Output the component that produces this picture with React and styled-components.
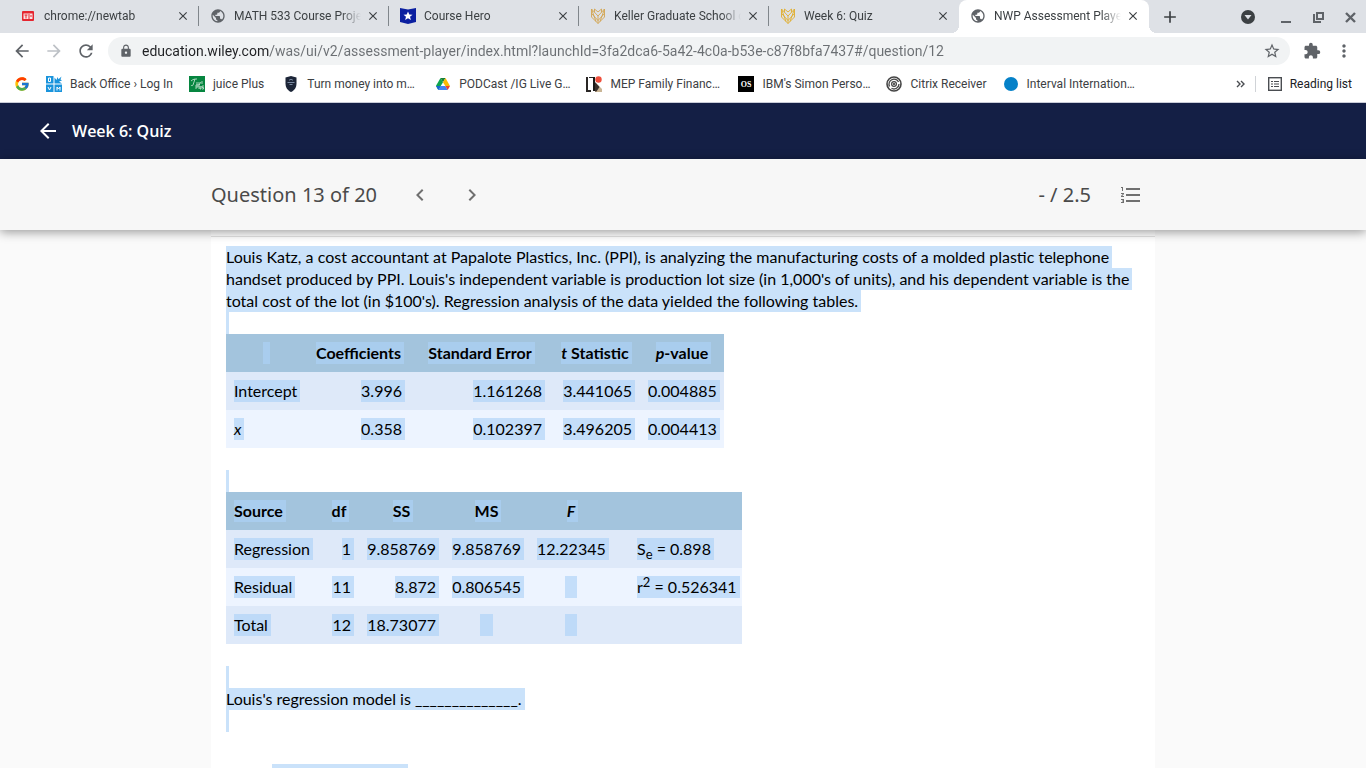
import styled, { createGlobalStyle, css } from "styled-components";
import {
    MdAdd,
    MdArrowBack,
    MdArrowForward,
    MdChevronLeft,
    MdChevronRight,
    MdClose,
    MdExtension,
    MdFormatListNumbered,
    MdLock,
    MdMoreVert,
    MdPublic,
    MdRefresh,
    MdStarBorder,
} from "react-icons/md";
import { FcGoogle } from "react-icons/fc";

const GlobalStyle = createGlobalStyle`
    * {
        box-sizing: border-box;
    }

    body {
        margin: 0;
        background: #fafafa;
        font-family: Roboto, "Liberation Sans", sans-serif;
    }

    button {
        display: flex;
        align-items: center;
        justify-content: center;
        flex: none;
        padding: 0;
        border: none;
        background: transparent;
        color: inherit;
        cursor: pointer;
    }

    svg {
        display: block;
        flex: none;
    }
`;

const Page = styled.div`
    display: flex;
    flex-direction: column;
    height: 100vh;
    overflow: hidden;
`;

/* ---------- browser ---------- */

const TabStrip = styled.div`
    display: flex;
    align-items: center;
    flex: none;
    height: 33px;
    padding-left: 9px;
    background: #dee1e6;
    color: #3c4043;
`;

const Tab = styled.div`
    position: relative;
    display: flex;
    align-items: center;
    flex: 0 1 190px;
    min-width: 0;
    height: 33px;
    padding: 0 10px 1px 11px;

    ${props =>
        props.$active
            ? css`
                background: #fff;
                border-radius: 8px 8px 0 0;

                &::before,
                &::after {
                    content: "";
                    position: absolute;
                    bottom: 0;
                    width: 8px;
                    height: 8px;
                }

                &::before {
                    left: -8px;
                    background: radial-gradient(circle at 0 0, transparent 8px, #fff 8px);
                }

                &::after {
                    right: -8px;
                    background: radial-gradient(circle at 100% 0, transparent 8px, #fff 8px);
                }
            `
            : ""
    }

    ${props =>
        props.$divider
            ? css`
                &::after {
                    content: "";
                    position: absolute;
                    top: 6px;
                    right: 0;
                    width: 1px;
                    height: 20px;
                    background: #80868b;
                }
            `
            : ""
    }
`;

const TabTitle = styled.span`
    flex: 1;
    min-width: 0;
    margin: 0 6px 0 8px;
    overflow: hidden;
    white-space: nowrap;
    font-size: 12px;
    line-height: 16px;
    mask-image: linear-gradient(to right, #000 calc(100% - 20px), transparent);
`;

const CloseTab = styled.button`
    width: 12px;
    height: 16px;
`;

const NewTab = styled.button`
    width: 28px;
    height: 28px;
    margin-left: 7px;
`;

const WindowControls = styled.div`
    display: flex;
    align-items: center;
    gap: 16px;
    margin-left: auto;
    padding-right: 8px;
    color: #5f6368;

    button {
        width: 16px;
        height: 16px;
    }

    button:first-child {
        margin-right: 6px;
        color: #3c4043;
    }
`;

const Toolbar = styled.div`
    display: flex;
    align-items: center;
    flex: none;
    gap: 12px;
    height: 36px;
    padding: 0 12px;
    background: #fff;
    color: #5f6368;
`;

const ToolButton = styled.button`
    width: 20px;
    height: 20px;
    color: ${props => (props.disabled ? "#bdc1c6" : "#5f6368")};
`;

const AddressBar = styled.div`
    display: flex;
    align-items: center;
    flex: 1;
    gap: 9px;
    height: 28px;
    padding: 0 8px 0 11px;
    border-radius: 14px;
    background: #f1f3f4;
`;

const AddressInput = styled.input`
    flex: 1;
    min-width: 0;
    height: 24px;
    padding: 0;
    border: none;
    outline: none;
    font-family: inherit;
    font-size: 14px;
    color: #202124;
    /* host part is darker than the path */
    background: linear-gradient(to right, #202124 128px, #6b6f73 128px);
    background-clip: text;
    -webkit-text-fill-color: transparent;
`;

const BookmarkBar = styled.nav`
    display: flex;
    align-items: center;
    flex: none;
    gap: 16px;
    height: 34px;
    padding: 0 14px 3px;
    background: #fff;
    border-bottom: 1px solid #c9ccd8;
`;

const Bookmark = styled.a`
    display: flex;
    align-items: center;
    gap: 8px;
    min-width: ${props => (props.$wide ? "136px" : 0)};
    font-size: 12px;
    line-height: 16px;
    white-space: nowrap;
    color: #3c4043;
    text-decoration: none;
`;

const BookmarkEnd = styled.div`
    display: flex;
    align-items: center;
    gap: 10px;
    margin-left: auto;
`;

const ReadingList = styled.button`
    gap: 8px;
    height: 16px;
    padding-left: 12px;
    border-left: 1px solid #d0d3d7;
    font-family: inherit;
    font-size: 12px;
    color: #202124;
`;

/* ---------- quiz ---------- */

const QuizHeader = styled.header`
    display: flex;
    align-items: center;
    flex: none;
    gap: 12px;
    height: 56px;
    padding: 0 36px;
    background: #141f45;
    color: #fff;
`;

const QuizTitle = styled.h1`
    margin: 0;
    font-family: "Open Sans", "Noto Sans", sans-serif;
    font-size: 16px;
    font-weight: 600;
    line-height: 24px;
`;

const QuestionBar = styled.div`
    position: relative;
    z-index: 1;
    flex: none;
    background: #f7f7f7;
    box-shadow: 0 2px 10px rgba(0, 0, 0, 0.4);
`;

const QuestionBarInner = styled.div`
    display: flex;
    align-items: center;
    max-width: 944px;
    height: 71px;
    margin: 0 auto;
    padding-right: 12px;
    font-family: "Noto Sans", "Open Sans", sans-serif;
    font-size: 20px;
    line-height: 28px;
    color: #4a4a4a;
`;

const QuestionTitle = styled.h2`
    margin: 0 31px 0 0;
    font-size: 20px;
    font-weight: 400;
`;

const QuestionNav = styled.div`
    display: flex;
    gap: 28px;
    color: #707070;
`;

const Score = styled.span`
    margin: 0 28px 0 auto;
`;

const ListButton = styled.button`
    color: #707070;
`;

const Sheet = styled.main`
    flex: 1;
    width: 100%;
    min-height: 0;
    max-width: 944px;
    margin: 0 auto;
    overflow: hidden;
    background: #fff;
    font-family: Lato, sans-serif;
    font-size: 16px;
    line-height: 22px;
    color: #000;
`;

const SheetTop = styled.div`
    height: 7px;
    border-bottom: 1px solid #e2e2e2;
`;

const QuestionBody = styled.div`
    padding: 9px 15px 0;
`;

const Selected = styled.span`
    margin-right: -3px;
    padding: 1px 3px 2px 0;
    background: rgba(172, 209, 247, 0.64);
    box-decoration-break: clone;
    -webkit-box-decoration-break: clone;

    sub,
    sup {
        font-size: 13px;
        line-height: 0;
    }
`;

const SelectedBlank = styled.span`
    display: inline-block;
    height: 22px;
    vertical-align: top;
    white-space: pre;
    background: rgba(172, 209, 247, 0.64);
`;

const Text = styled.p`
    margin: 0;
`;

const EmptyLine = styled.div`
    width: 3px;
    height: 22px;
    margin-top: ${props => (props.$spaced ? "22px" : 0)};
    background: #cae2fa;
`;

const DataTable = styled.table`
    table-layout: fixed;
    width: ${props => props.$width}px;
    border-collapse: collapse;

    th,
    td {
        height: 38px;
        padding: 8px;
        white-space: nowrap;
    }

    thead tr {
        background: #a3c4dd;
    }

    tbody tr:nth-child(odd) {
        background: #dee9f9;
    }

    tbody tr:nth-child(even) {
        background: #edf4ff;
    }
`;

const Column = styled.col`
    width: ${props => props.$width}px;
`;

const HeadCell = styled.th`
    text-align: ${props => props.$align};
`;

const Cell = styled.td`
    text-align: ${props => props.$align};
`;

const Answers = styled.div`
    padding: 32px 46px;
`;

const AnswerLine = styled.div`
    width: 136px;
    height: 22px;
    background: #cae2fa;
`;

/* ---------- icons ---------- */

const NewTabIcon = () => (
    <svg width="16" height="16" viewBox="0 0 16 16">
        <rect x="2" y="3" width="12" height="10" rx="1" fill="#e5252f" />
        <rect x="3.500" y="5.500" width="9" height="5.500" fill="#fbe3e4" />
        <path d="M4.500 7h3M6 7v3.500M9 6v5M10 8h2" stroke="#e5252f" strokeWidth="1" fill="none" />
    </svg>
);

const CourseHeroIcon = () => (
    <svg width="16" height="16" viewBox="0 0 16 16">
        <path d="M0 0l8 1.500L16 0v14l-8 2-8-2z" fill="#0b1fa0" />
        <path d="M8 3.500l1.300 3 3.200.2-2.500 2 .9 3.200L8 10.200l-2.900 1.700.9-3.200-2.500-2 3.200-.2z" fill="#fff" />
    </svg>
);

const KellerIcon = ({ color }) => (
    <svg width="16" height="16" viewBox="0 0 16 16" fill="none" stroke={color} strokeWidth=".9">
        <path d="M1.500 1v8L8 15.500 14.500 9V1L8 8zM1.500 1L6 13.500M14.500 1L10 13.500M4.500 4.200V1L8 4l3.500-3v3.200M1.500 5.500L8 12.500l6.500-7M8 8v7.500" />
    </svg>
);

const ProfileIcon = () => (
    <svg width="14" height="14" viewBox="0 0 14 14">
        <circle cx="7" cy="7" r="7" fill="#3c4043" />
        <path d="M3.500 5h7L7 9.500z" fill="#dee1e6" />
    </svg>
);

const MinimizeIcon = () => (
    <svg width="16" height="16" viewBox="0 0 16 16">
        <path d="M3 12h10v2H3z" fill="currentColor" />
    </svg>
);

const RestoreIcon = () => (
    <svg width="16" height="16" viewBox="0 0 16 16" fill="none" stroke="currentColor" strokeWidth="2">
        <path d="M7 4h6v6H7zM4 5v8h7" />
    </svg>
);

const CloseWindowIcon = () => (
    <svg width="16" height="16" viewBox="0 0 16 16" stroke="currentColor" strokeWidth="2.400">
        <path d="M4 4l9 9M13 4l-9 9" />
    </svg>
);

const BackOfficeIcon = () => (
    <svg width="16" height="16" viewBox="0 0 16 16">
        <path d="M0 0h7.500v7.500H0zM0 8.500h7.500V16H0zM8.500 8.500H16V16H8.500z" fill="#1a94dc" />
        <path d="M8.500 7.500V1.500l2 2.500 1-3 1 2.300L15.500.500l-1 3 1.500 1-3 1 3 2z" fill="#1a94dc" />
        <path d="M2.500 2v3.500h2V2zM2 11l1.500 3L5 11M11 14.500V11l1.500 2 1.500-2v3.500" fill="none" stroke="#fff" />
    </svg>
);

const JuiceIcon = () => (
    <svg width="16" height="16" viewBox="0 0 16 16">
        <rect width="16" height="16" fill="#068640" />
        <path
            d="M2 5c2-2 4-2 6-2M6 3L4 9c-.5 1-1.500 1-2 0M8 6v3M10 6v3l2-3M13 5v3M7 13V9h2v2H7M10 8v5M11 10v3h1v-3M13 13h1.500v-1.500H13V10h2"
            fill="none"
            stroke="#cfe9d9"
            strokeWidth=".8"
        />
    </svg>
);

const ShieldIcon = () => (
    <svg width="16" height="16" viewBox="0 0 16 16">
        <path d="M8 0l5.500 1.500v6C13.500 12 11 14.500 8 16c-3-1.500-5.500-4-5.500-8.500v-6z" fill="#1c2537" />
        <path d="M6 4.500a2.400 2.400 0 014 0M4.500 6.500h7M6.500 8.500h3" stroke="#8797b0" strokeWidth=".9" fill="none" />
    </svg>
);

const DriveIcon = () => (
    <svg width="16" height="16" viewBox="0 0 16 16">
        <path d="M5.500 2L1 9.800l2.300 4.200L8 6.200z" fill="#0da54f" />
        <path d="M5.500 2h5L8 6.200z" fill="#188038" />
        <path d="M10.500 2l4.500 8h-4.700L8 6.200z" fill="#fbbc04" />
        <path d="M5.700 10h4.600l2.400 4H3.300z" fill="#4285f4" />
        <path d="M1 10h4.700l-2.400 4z" fill="#1967d2" />
        <path d="M10.300 10H15l-2.300 4z" fill="#ea4335" />
    </svg>
);

const MepIcon = () => (
    <svg width="16" height="16" viewBox="0 0 16 16">
        <rect width="16" height="16" fill="#fff" />
        <path d="M0 1h2v13H0zM3 1h5v1H3zM0 14h5v2H0z" fill="#2a2725" />
        <path d="M7 1h2v14H7z" fill="#1b1917" />
        <path d="M10 7l6 6v3H9z" fill="#c9b595" />
        <path d="M9 6l4.500 5-3 4.500H9z" fill="#3a302a" />
        <circle cx="12.500" cy="3.500" r="3.200" fill="#ef4f3c" />
    </svg>
);

const OsIcon = () => (
    <svg width="16" height="16" viewBox="0 0 16 16">
        <rect width="16" height="16" fill="#000" />
        <text x="8" y="11" textAnchor="middle" fontFamily="Liberation Serif, serif" fontWeight="700" fontSize="8" fill="#fff">OS</text>
    </svg>
);

const CitrixIcon = () => (
    <svg width="16" height="16" viewBox="0 0 16 16" fill="none" stroke="#454545">
        <circle cx="8" cy="8" r="7" strokeWidth="1.600" />
        <path d="M12.500 6A5 5 0 103.500 10.500M5.500 12.300A5 5 0 0013 8" strokeWidth="1.300" />
        <circle cx="8" cy="8" r="2.400" strokeWidth="1.200" />
        <circle cx="8" cy="8" r=".8" fill="#454545" />
    </svg>
);

const IntervalIcon = () => (
    <svg width="16" height="16" viewBox="0 0 16 16">
        <circle cx="8" cy="8" r="7" fill="#0581c8" />
    </svg>
);

const ReadingListIcon = () => (
    <svg width="14" height="14" viewBox="0 0 14 14" fill="none" stroke="#4a4d51">
        <rect x=".7" y=".7" width="12.600" height="12.600" strokeWidth="1.400" />
        <path d="M3 4.500h2M3 7h2M3 9.500h2M6 4.500h5M6 7h5M6 9.500h5" strokeWidth="1.200" />
    </svg>
);

const DoubleChevronIcon = () => (
    <svg width="9" height="8" viewBox="0 0 9 8" fill="none" stroke="#4a4d51" strokeWidth="1.400">
        <path d="M1 1l3 3-3 3M5 1l3 3-3 3" />
    </svg>
);

const tabs = [
    { title: "chrome://newtab", icon: <NewTabIcon />, divider: true },
    { title: "MATH 533 Course Project", icon: <MdPublic size={16} color="#5f6368" />, divider: true },
    { title: "Course Hero", icon: <CourseHeroIcon />, divider: true },
    { title: "Keller Graduate School of", icon: <KellerIcon color="#d3a550" />, divider: true },
    { title: "Week 6: Quiz", icon: <KellerIcon color="#e0ae2d" /> },
    { title: "NWP Assessment Player", icon: <MdPublic size={16} color="#5f6368" />, active: true },
];

const bookmarks = [
    { label: "", icon: <FcGoogle size={16} /> },
    { label: "Back Office › Log In", icon: <BackOfficeIcon /> },
    { label: "juice Plus\u00a0", icon: <JuiceIcon /> },
    { label: "Turn money into m…", icon: <ShieldIcon />, wide: true },
    { label: "PODCast /IG Live G…", icon: <DriveIcon /> },
    { label: "MEP Family Financ…", icon: <MepIcon />, wide: true },
    { label: "IBM's Simon Perso…", icon: <OsIcon /> },
    { label: "Citrix Receiver", icon: <CitrixIcon /> },
    { label: "Interval Internation…", icon: <IntervalIcon /> },
];

const coefficientRows = [
    ["Intercept", "3.996", "1.161268", "3.441065", "0.004885"],
    [<i>x</i>, "0.358", "0.102397", "3.496205", "0.004413"],
];

// a number stands for a cell that holds only that many spaces
const varianceRows = [
    ["Regression", "1", "9.858769", "9.858769", "12.22345", null, <>S<sub>e</sub> = 0.898</>],
    ["Residual", "11", "8.872", "0.806545", 3, null, <>r<sup>2</sup> = 0.526341</>],
    ["Total", "12", "18.73077", 3, 3, null, null],
];

const renderContent = content => {
    if (content === null) return null;
    if (typeof content === "number") return <SelectedBlank>{"\u00a0".repeat(content)}</SelectedBlank>;
    return <Selected>{content}</Selected>;
};

const getAlign = (content, index) => {
    if (typeof content === "number") return "center";
    return index === 0 || index === 6 ? "left" : "right";
};

function StatTable({ width, columns, head, rows }) {
    return (
        <DataTable $width={width}>
            <colgroup>
                {columns.map((column, index) => <Column key={index} $width={column} />)}
            </colgroup>
            <thead>
                <tr>
                    {head.map((content, index) => (
                        <HeadCell key={index} scope="col" $align={content === "Source" ? "left" : "center"}>
                            {renderContent(content)}
                        </HeadCell>
                    ))}
                </tr>
            </thead>
            <tbody>
                {rows.map((row, rowIndex) => (
                    <tr key={rowIndex}>
                        {row.map((content, index) => (
                            <Cell key={index} $align={getAlign(content, index)}>{renderContent(content)}</Cell>
                        ))}
                    </tr>
                ))}
            </tbody>
        </DataTable>
    );
}

function Browser() {
    return (
        <>
            <TabStrip>
                {tabs.map(({ title, icon, divider, active }) => (
                    <Tab key={title} $divider={divider} $active={active}>
                        {icon}
                        <TabTitle>{title}</TabTitle>
                        <CloseTab aria-label="Close tab"><MdClose size={14} /></CloseTab>
                    </Tab>
                ))}
                <NewTab aria-label="New tab"><MdAdd size={20} /></NewTab>
                <WindowControls>
                    <button aria-label="Search tabs"><ProfileIcon /></button>
                    <button aria-label="Minimize"><MinimizeIcon /></button>
                    <button aria-label="Restore"><RestoreIcon /></button>
                    <button aria-label="Close"><CloseWindowIcon /></button>
                </WindowControls>
            </TabStrip>

            <Toolbar>
                <ToolButton aria-label="Back"><MdArrowBack size={20} /></ToolButton>
                <ToolButton aria-label="Forward" disabled><MdArrowForward size={20} /></ToolButton>
                <ToolButton aria-label="Reload"><MdRefresh size={20} /></ToolButton>
                <AddressBar>
                    <MdLock size={14} />
                    <AddressInput
                        type="text"
                        aria-label="Address"
                        defaultValue="education.wiley.com/was/ui/v2/assessment-player/index.html?launchId=3fa2dca6-5a42-4c0a-b53e-c87f8bfa7437#/question/12"
                    />
                    <ToolButton aria-label="Bookmark this page"><MdStarBorder size={18} /></ToolButton>
                </AddressBar>
                <ToolButton aria-label="Extensions"><MdExtension size={18} /></ToolButton>
                <ToolButton aria-label="Menu"><MdMoreVert size={20} /></ToolButton>
            </Toolbar>

            <BookmarkBar>
                {bookmarks.map(({ label, icon, wide }) => (
                    <Bookmark key={label} href="#" aria-label={label || "Google"} $wide={wide}>
                        {icon}
                        {label}
                    </Bookmark>
                ))}
                <BookmarkEnd>
                    <button aria-label="More bookmarks"><DoubleChevronIcon /></button>
                    <ReadingList><ReadingListIcon />Reading list</ReadingList>
                </BookmarkEnd>
            </BookmarkBar>
        </>
    );
}

export default function App() {
    return (
        <Page>
            <GlobalStyle />
            <Browser />

            <QuizHeader>
                <button aria-label="Back to course"><MdArrowBack size={24} /></button>
                <QuizTitle>Week 6: Quiz</QuizTitle>
            </QuizHeader>

            <QuestionBar>
                <QuestionBarInner>
                    <QuestionTitle>Question 13 of 20</QuestionTitle>
                    <QuestionNav>
                        <button aria-label="Previous question"><MdChevronLeft size={24} /></button>
                        <button aria-label="Next question"><MdChevronRight size={24} /></button>
                    </QuestionNav>
                    <Score>- / 2.5</Score>
                    <ListButton aria-label="Question list"><MdFormatListNumbered size={24} /></ListButton>
                </QuestionBarInner>
            </QuestionBar>

            <Sheet>
                <SheetTop />
                <QuestionBody>
                    <Text>
                        <Selected>
                            Louis Katz, a cost accountant at Papalote Plastics, Inc. (PPI), is analyzing the manufacturing
                            costs of a molded plastic telephone handset produced by PPI. Louis's independent variable is
                            production lot size (in 1,000's of units), and his dependent variable is the total cost of the
                            lot (in $100's). Regression analysis of the data yielded the following tables.
                        </Selected>
                    </Text>
                    <EmptyLine />
                    <StatTable
                        width={498}
                        columns={[81, 103, 140, 90, 84]}
                        head={[2, "Coefficients", "Standard Error", <><i>t</i> Statistic</>, <><i>p</i>-value</>]}
                        rows={coefficientRows}
                    />
                    <EmptyLine $spaced />
                    <StatTable
                        width={516}
                        columns={[93, 40, 85, 85, 84, 16, 113]}
                        head={["Source", "df", "SS", "MS", <i>F</i>, null, null]}
                        rows={varianceRows}
                    />
                    <EmptyLine $spaced />
                    <Text><Selected>Louis's regression model is ______________.</Selected></Text>
                    <EmptyLine />
                    <Answers>
                        <AnswerLine />
                    </Answers>
                </QuestionBody>
            </Sheet>
        </Page>
    );
}
